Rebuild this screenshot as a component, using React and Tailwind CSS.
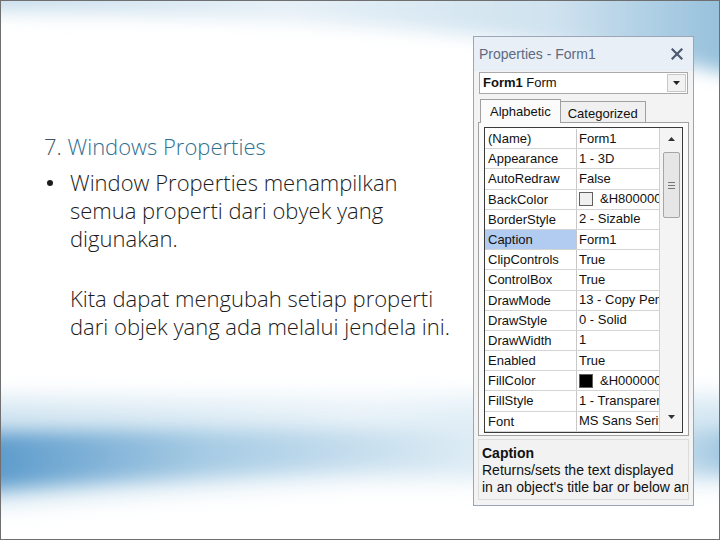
import React from "react";

const rows = [
  ["(Name)", "Form1"],
  ["Appearance", "1 - 3D"],
  ["AutoRedraw", "False"],
  ["BackColor", "&H8000000F", "white"],
  ["BorderStyle", "2 - Sizable"],
  ["Caption", "Form1", null, true],
  ["ClipControls", "True"],
  ["ControlBox", "True"],
  ["DrawMode", "13 - Copy Pen"],
  ["DrawStyle", "0 - Solid"],
  ["DrawWidth", "1"],
  ["Enabled", "True"],
  ["FillColor", "&H00000000", "black"],
  ["FillStyle", "1 - Transparent"],
  ["Font", "MS Sans Serif"],
];

function Background() {
  return (
    <svg className="absolute inset-0" width="720" height="540" viewBox="0 0 720 540">
      <defs>
        <filter id="blur1" x="-20%" y="-50%" width="140%" height="200%">
          <feGaussianBlur stdDeviation="9" />
        </filter>
        <filter id="blur3" x="-20%" y="-50%" width="140%" height="200%">
          <feGaussianBlur stdDeviation="12" />
        </filter>
        <linearGradient id="topg" x1="0" y1="0" x2="1" y2="0">
          <stop offset="0" stopColor="#c4dbea" />
          <stop offset="0.4" stopColor="#e6f0f7" />
          <stop offset="0.75" stopColor="#cfe2ef" />
          <stop offset="1" stopColor="#8dbbd9" />
        </linearGradient>
        <linearGradient id="botg" x1="0" y1="0" x2="1" y2="0">
          <stop offset="0" stopColor="#5596c9" />
          <stop offset="0.3" stopColor="#a6cbe4" />
          <stop offset="0.65" stopColor="#deecf5" />
          <stop offset="0.9" stopColor="#c6deee" />
          <stop offset="1" stopColor="#8fbcd9" />
        </linearGradient>
        <linearGradient id="botg2" x1="0" y1="0" x2="1" y2="0">
          <stop offset="0" stopColor="#cfe3f0" />
          <stop offset="0.5" stopColor="#e8f2f8" />
          <stop offset="1" stopColor="#d3e6f2" />
        </linearGradient>
      </defs>
      <path d="M-30,-30 L750,-30 L750,78 C600,40 350,16 -30,10 Z" fill="url(#topg)" filter="url(#blur1)" />
      <path d="M-30,398 C200,400 500,394 750,396 L750,482 C500,472 250,482 -30,505 Z" fill="url(#botg2)" filter="url(#blur3)" />
      <path d="M-30,432 C150,428 400,428 750,430 L750,472 C500,462 250,468 -30,490 Z" fill="url(#botg)" filter="url(#blur1)" />
    </svg>
  );
}

function Row({ name, value, swatch, selected }) {
  return (
    <div className="flex h-[20.2px] border-b border-[#d4d4d4]">
      <div
        className={
          "w-[92px] shrink-0 border-r border-[#c8c8c8] pl-[3px] leading-[20px] " +
          (selected ? "bg-[#b1cbf1]" : "bg-white")
        }
      >
        {name}
      </div>
      <div className="flex-1 overflow-hidden whitespace-nowrap bg-white pl-[2px] leading-[20px] flex items-center">
        {swatch === "white" && (
          <span className="mr-[4px] inline-block h-[14px] w-[14px] shrink-0 border border-[#606060] bg-[#f0f0f0]" />
        )}
        {swatch === "black" && (
          <span className="mr-[4px] inline-block h-[14px] w-[14px] shrink-0 border border-[#606060] bg-black" />
        )}
        <span className={swatch ? "ml-[3px]" : ""}>{value}</span>
      </div>
    </div>
  );
}

function Panel() {
  return (
    <div
      className="flex w-[221px] h-[470px] flex-col border border-[#9aa6b6] bg-[#f3f3f3] text-[#111]"
      style={{ fontFamily: '"Liberation Sans", Arial, sans-serif' }}
    >
      <div className="flex h-[34px] items-center justify-between bg-[#e9eff7] pl-[5px] pr-[10px]">
        <span className="text-[14px] text-[#5d6b80]">Properties - Form1</span>
        <svg width="12" height="12" viewBox="0 0 12 12">
          <path d="M1.5 1.5 L10.5 10.5 M10.5 1.5 L1.5 10.5" stroke="#4b5a70" strokeWidth="2.2" strokeLinecap="square" />
        </svg>
      </div>
      <div className="mx-[5px] mt-[1px] flex h-[22px] items-center border border-[#a9a9a9] bg-white">
        <div className="flex-1 pl-[3px] text-[13px]">
          <span className="font-bold">Form1</span> <span>Form</span>
        </div>
        <div className="mr-[1px] flex h-[18px] w-[19px] items-center justify-center border border-[#c8c8c8] bg-[#f2f2f2]">
          <svg width="7" height="4" viewBox="0 0 7 4">
            <path d="M0 0 L7 0 L3.5 4 Z" fill="#222" />
          </svg>
        </div>
      </div>
      <div className="ml-[6px] mr-[4px] mt-[5px] flex items-end">
        <div className="relative z-10 -mb-px h-[24px] border border-b-0 border-[#a0a0a0] bg-[#fbfbfb] px-[9px] pt-[2px] text-[13px]">
          Alphabetic
        </div>
        <div className="h-[21px] border border-b-0 border-l-0 border-[#a0a0a0] bg-[#f0f0f0] px-[7px] pt-[2px] text-[13px]">
          Categorized
        </div>
      </div>
      <div className="mx-[4px] h-[314px] border border-[#a0a0a0] bg-[#fbfbfb] px-[5px] pt-[4px]">
        <div className="flex h-[306px] border border-[#3a3a3a] bg-white text-[13px]">
          <div className="flex-1 overflow-hidden border-r border-[#d0d0d0] pt-px">
            {rows.map((r) => (
              <Row key={r[0]} name={r[0]} value={r[1]} swatch={r[2]} selected={r[3]} />
            ))}
          </div>
          <div className="flex w-[22px] shrink-0 flex-col items-center bg-[#f4f4f4]">
            <div className="flex h-[22px] w-full items-center justify-center">
              <svg width="7" height="4" viewBox="0 0 7 4">
                <path d="M0 4 L7 4 L3.5 0 Z" fill="#333" />
              </svg>
            </div>
            <div className="mt-[2px] flex h-[66px] w-[17px] flex-col items-center justify-center gap-[2px] rounded-[2px] border border-[#a6a6a6] bg-[#e6e6e6]">
              <span className="h-px w-[7px] bg-[#777]" />
              <span className="h-px w-[7px] bg-[#777]" />
              <span className="h-px w-[7px] bg-[#777]" />
            </div>
            <div className="flex-1" />
            <div className="flex h-[22px] w-full items-center justify-center pb-[8px]">
              <svg width="7" height="4" viewBox="0 0 7 4">
                <path d="M0 0 L7 0 L3.5 4 Z" fill="#333" />
              </svg>
            </div>
          </div>
        </div>
      </div>
      <div className="mx-[4px] mt-[3px] mb-[5px] flex-1 overflow-hidden border border-[#dcdcdc] bg-[#f2f2f2] pl-[3px] pt-[4px] text-[14px] leading-[17px]">
        <div className="font-bold text-[14px] leading-[18px]">Caption</div>
        <div className="whitespace-nowrap">Returns/sets the text displayed</div>
        <div className="whitespace-nowrap">in an object's title bar or below an</div>
      </div>
    </div>
  );
}

export default function App() {
  return (
    <div className="relative h-[540px] w-[720px] overflow-hidden border border-[#6f6f6f] bg-white">
      <Background />
      <div className="relative flex">
        <div
          className="w-[472px] shrink-0 pl-[43px] pt-[131px] text-[#1c1c1c] whitespace-nowrap"
          style={{ fontFamily: '"Open Sans", "Liberation Sans", sans-serif' }}
        >
          <div className="text-[22px] font-light leading-[28px] text-[#2f6f8f]">
            <span className="text-[#3d5565]">7.</span> Windows Properties
          </div>
          <div className="mt-[8px] flex text-[22px] font-light leading-[28px]">
            <span className="flex w-[26px] shrink-0 pl-[3px] pt-[12px]">
              <span className="h-[6px] w-[6px] rounded-full bg-[#1c1c1c]" />
            </span>
            <div>
              <p>
                Window Properties menampilkan
                <br />
                semua properti dari obyek yang
                <br />
                digunakan.
              </p>
              <p className="mt-[32px]">
                Kita dapat mengubah setiap properti
                <br />
                dari objek yang ada melalui jendela ini.
              </p>
            </div>
          </div>
        </div>
        <div className="mt-[35px]">
          <Panel />
        </div>
      </div>
    </div>
  );
}
